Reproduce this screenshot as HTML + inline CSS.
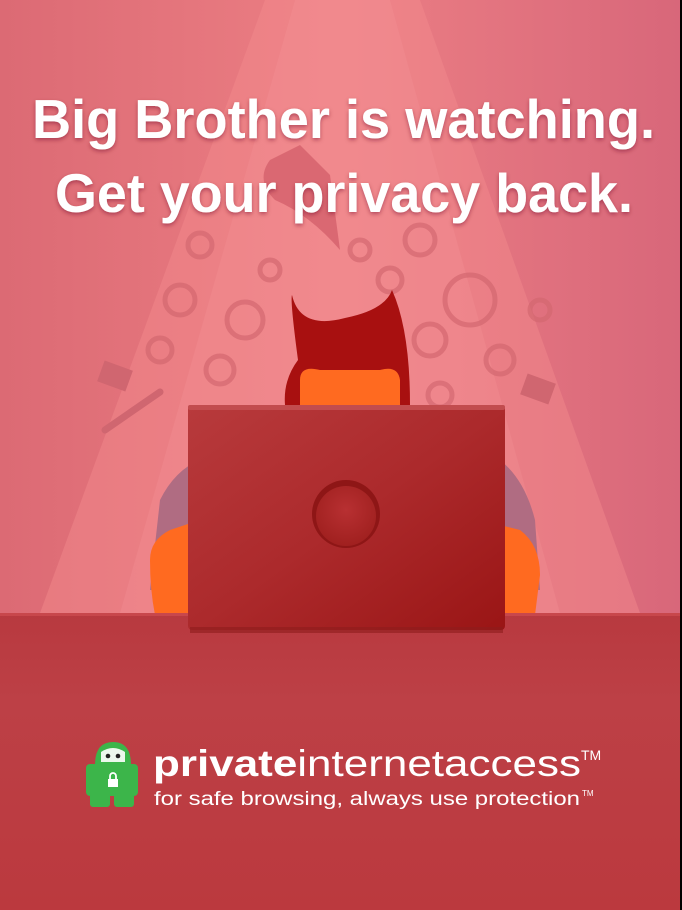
<!DOCTYPE html>
<html><head><meta charset="utf-8"><style>
html,body{margin:0;padding:0;}
body{width:682px;height:910px;overflow:hidden;background:#000;}
</style></head><body>
<svg width="682" height="910" viewBox="0 0 682 910" xmlns="http://www.w3.org/2000/svg" style="display:block">
<defs>
<linearGradient id="bg" x1="0" y1="0" x2="1" y2="0">
<stop offset="0" stop-color="#dc6a74"/><stop offset="0.5" stop-color="#ec7f84"/><stop offset="1" stop-color="#d8677a"/>
</linearGradient>
<linearGradient id="table" x1="0" y1="0" x2="0" y2="1">
<stop offset="0" stop-color="#b8393f"/><stop offset="0.3" stop-color="#bd4046"/><stop offset="1" stop-color="#bb393e"/>
</linearGradient>
<linearGradient id="lap" x1="0" y1="0" x2="1" y2="1">
<stop offset="0" stop-color="#b83a3c"/><stop offset="0.5" stop-color="#ac2a2c"/><stop offset="1" stop-color="#9a1515"/>
</linearGradient>
<radialGradient id="btn" cx="0.5" cy="0.4" r="0.6">
<stop offset="0" stop-color="#b83032"/><stop offset="1" stop-color="#a0201f"/>
</radialGradient>
<filter id="sh"><feDropShadow dx="0" dy="2" stdDeviation="2" flood-color="#6a1020" flood-opacity="0.45"/></filter>
</defs>
<rect x="0" y="0" width="680" height="910" fill="url(#bg)"/>
<!-- light cone -->
<polygon points="265,0 420,0 640,613 40,613" fill="#f38c8e" opacity="0.45"/>
<polygon points="295,0 390,0 560,613 120,613" fill="#f8979a" opacity="0.25"/>
<!-- swirls -->
<g fill="none" stroke="#d46870" stroke-width="5" opacity="0.7">
<circle cx="200" cy="245" r="12"/><circle cx="180" cy="300" r="15"/><circle cx="245" cy="320" r="18"/><circle cx="160" cy="350" r="12"/>
<circle cx="220" cy="370" r="14"/><circle cx="270" cy="270" r="10"/><circle cx="420" cy="240" r="15"/><circle cx="470" cy="300" r="25"/>
<circle cx="500" cy="360" r="14"/><circle cx="430" cy="340" r="16"/><circle cx="540" cy="310" r="10"/><circle cx="390" cy="280" r="12"/>
<circle cx="440" cy="395" r="12"/><circle cx="360" cy="250" r="10"/>
</g>
<path d="M270 160 L300 145 L330 175 L340 250 Q310 215 275 200 Q255 180 270 160Z" fill="#d4606c" opacity="0.8"/>
<!-- envelopes / bones -->
<rect x="100" y="365" width="30" height="22" fill="#d06670" transform="rotate(20 115 376)"/>
<rect x="523" y="378" width="30" height="22" fill="#d06670" transform="rotate(20 538 389)"/>
<path d="M105 430 L160 392" stroke="#d06670" stroke-width="7" stroke-linecap="round"/>
<!-- person -->
<path d="M160 500 Q175 470 200 460 L500 460 Q525 480 535 520 L540 590 L150 590Z" fill="#b06c82"/>
<path d="M150 560 Q150 540 170 530 L200 520 L200 615 L155 615 Q150 590 150 560Z" fill="#ff6a20"/>
<path d="M480 520 L520 530 Q540 545 540 575 L535 615 L480 615Z" fill="#ff6a20"/>
<path d="M298 360 Q290 300 292 295 Q300 330 345 318 Q385 310 392 290 Q410 330 410 405 L285 405 Q283 380 298 360Z" fill="#a81010"/>
<path d="M300 380 Q300 365 320 370 L380 370 Q398 365 400 380 L400 405 L300 405Z" fill="#ff6a20"/>
<!-- table -->
<rect x="0" y="613" width="680" height="297" fill="url(#table)"/>
<rect x="0" y="613" width="680" height="3" fill="#c8474c"/>
<!-- laptop -->
<rect x="188" y="405" width="317" height="225" rx="4" fill="url(#lap)"/>
<rect x="188" y="405" width="317" height="5" rx="2" fill="#c24c4e"/>
<circle cx="346" cy="514" r="34" fill="#8e1616"/>
<circle cx="346" cy="516" r="30" fill="url(#btn)"/>
<rect x="190" y="627" width="313" height="6" fill="#8e1c1c" opacity="0.6"/>
<!-- headline -->
<g font-family="Liberation Sans, sans-serif" font-weight="bold" fill="#fff" filter="url(#sh)">
<text x="32" y="138" font-size="55" textLength="623" lengthAdjust="spacingAndGlyphs">Big Brother is watching.</text>
<text x="55" y="212" font-size="55" textLength="578" lengthAdjust="spacingAndGlyphs">Get your privacy back.</text>
</g>
<!-- logo icon -->
<g fill="#3cb54a">
<path d="M95 765 Q95 742 113 742 Q131 742 131 765Z"/>
<rect x="86" y="764" width="52" height="32" rx="4"/>
<rect x="90" y="793" width="20" height="14" rx="3"/>
<rect x="114" y="793" width="20" height="14" rx="3"/>
</g>
<path d="M101 752 Q113 744 125 752 L125 762 L101 762Z" fill="#fff" opacity="0.9"/>
<circle cx="108" cy="756" r="2.3" fill="#222"/><circle cx="118" cy="756" r="2.3" fill="#222"/>
<rect x="108" y="779" width="10" height="8" fill="#fff"/>
<path d="M110 779 v-3 a3 3 0 0 1 6 0 v3" fill="none" stroke="#fff" stroke-width="1.8"/>
<!-- logo text -->
<g font-family="Liberation Sans, sans-serif" fill="#fff">
<text x="153" y="776" font-size="37" textLength="428" lengthAdjust="spacingAndGlyphs"><tspan font-weight="bold">private</tspan><tspan font-weight="normal">internetaccess</tspan></text>
<text x="581" y="760" font-size="14">TM</text>
<text x="154" y="805" font-size="19" textLength="426" lengthAdjust="spacingAndGlyphs">for safe browsing, always use protection</text>
<text x="582" y="796" font-size="8">TM</text>
</g>
</svg>
</body></html>
